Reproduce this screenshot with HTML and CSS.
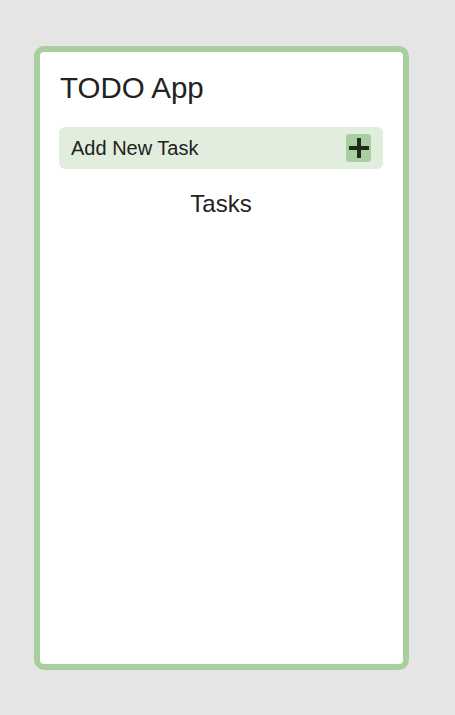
FILE: index.html
```html
<!DOCTYPE html>
<html lang="en">
<head>
  <meta charset="UTF-8">
  <title>TODO App</title>
  <link rel="stylesheet" href="styles.css">
</head>
<body>

  <div class="app">
    <h1>TODO App</h1>

    <div class="nueva-tarea">
      <span>Add New Task</span>
      <button class="btn-agregar" title="Add">
        <svg width="20" height="20" viewBox="0 0 20 20">
          <rect x="8" y="0" width="4" height="20" fill="#1f2a1f"/>
          <rect x="0" y="8" width="20" height="4" fill="#1f2a1f"/>
        </svg>
      </button>
    </div>

    <h2>Tasks</h2>
    <ul id="lista"></ul>
  </div>

</body>
</html>
```

FILE: styles.css
```css
body {
  font-family: "Liberation Sans", Arial, sans-serif;
  margin: 0;
  background-color: #e5e5e5;
  color: #222;
  padding: 46px 0 0 34px;
}

.app {
  width: 324px;
  height: 612px;
  background-color: #fff;
  border: 6px solid #aacf9f;
  border-radius: 10px;
  padding: 0 20px 0 19px;
}

h1 {
  font-size: 29.5px;
  font-weight: normal;
  margin: 19px 0 23px 1px;
  line-height: 33px;
}

.nueva-tarea {
  display: flex;
  align-items: center;
  justify-content: space-between;
  background-color: #e1eedd;
  border-radius: 6px;
  height: 42px;
  padding: 0 12px 0 12px;
  font-size: 20px;
}

.btn-agregar {
  width: 25px;
  height: 28px;
  background-color: #a9cfa0;
  border: none;
  border-radius: 3px;
  padding: 0;
  display: flex;
  align-items: center;
  justify-content: center;
  cursor: pointer;
}

h2 {
  font-size: 24px;
  font-weight: normal;
  text-align: center;
  margin: 21px 0 0 0;
  line-height: 28px;
}

ul {
  list-style: none;
  padding: 0;
}
```
